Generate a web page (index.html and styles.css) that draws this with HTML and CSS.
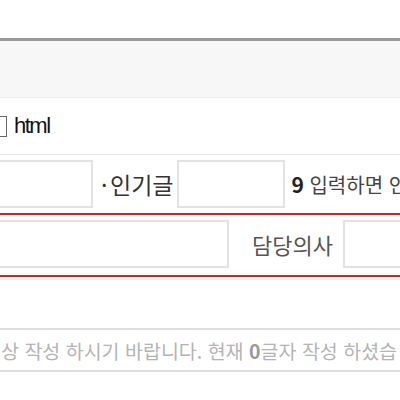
FILE: index.html
```html
<!DOCTYPE html>
<html lang="ko">
<head>
    <meta charset="UTF-8">
    <meta name="viewport" content="width=device-width, initial-scale=1.0">
    <title>글쓰기</title>
    <link rel="stylesheet" href="styles.css">
</head>
<body>
    <div class="page">
        <div class="board-head"></div>

        <div class="opt-row">
            <span class="check"></span>
            <span class="opt-label">html</span>
        </div>

        <div class="field-row">
            <input type="text" class="input in-a">
            <span class="label label-hot"><span class="dot">·</span>인기글</span>
            <input type="text" class="input in-b">
            <span class="hint"><b>9</b> 입력하면 인</span>
        </div>

        <div class="field-row red-row">
            <input type="text" class="input in-c">
            <span class="label label-doc">담당의사</span>
            <input type="text" class="input in-d">
        </div>

        <div class="blank-row"></div>

        <div class="count-box">
            <span class="count-text">상 작성 하시기 바랍니다. 현재 <b>0</b>글자 작성 하셨습</span>
        </div>
    </div>
</body>
</html>
```

FILE: styles.css
```css
body {
    margin: 0;
    background: #fff;
    color: #333;
    font-family: "Noto Sans CJK KR", "Noto Sans", sans-serif;
    width: 400px;
    height: 400px;
    overflow: hidden;
}
.page {
    padding-top: 38px;
}
.board-head {
    height: 56px;
    background: #f7f7f7;
    border-top: 3px solid #9a9a9a;
    border-bottom: 1px solid #ececec;
}
.opt-row {
    height: 56px;
    display: flex;
    align-items: center;
    gap: 7px;
    white-space: nowrap;
}
.check {
    width: 20px;
    height: 21px;
    margin-left: -13px;
    box-sizing: border-box;
    border: 1px solid #666;
    background: #fff;
    flex-shrink: 0;
}
.opt-label {
    font-family: "Liberation Sans", Arial, sans-serif;
    font-size: 22px;
    letter-spacing: -1.5px;
    color: #111;
}
.field-row {
    display: flex;
    align-items: center;
    border-top: 1px solid #e5e5e5;
    padding: 5px 0 5px;
    white-space: nowrap;
}
.input {
    height: 48px;
    box-sizing: border-box;
    border: 2px solid #e2e2e2;
    background: #fff;
    margin: 0;
    padding: 0;
    flex-shrink: 0;
}
.in-a {
    width: 120px;
    margin-left: -27px;
}
.in-b {
    width: 108px;
    margin-left: 4px;
}
.in-c {
    width: 260px;
    margin-left: -31px;
}
.in-d {
    width: 100px;
    margin-left: 10px;
}
.label {
    font-size: 23px;
    line-height: 1;
}
.label-hot {
    color: #333;
    margin-left: 8px;
}
.dot {
    display: inline-block;
    width: 9px;
}
.label-doc {
    font-size: 22px;
    color: #555;
    margin-left: 23px;
}
.hint {
    font-size: 20px;
    line-height: 1;
    color: #444;
    margin-left: 6px;
}
.hint b {
    font-size: 21px;
    color: #222;
}
.red-row {
    border-top: 2px solid #e01e1e;
    border-bottom: 2px solid #e01e1e;
    padding: 5px 0 7px;
}
.blank-row {
    height: 48px;
    margin-top: 2px;
    border-top: 1px solid #ededed;
}
.count-box {
    height: 40px;
    display: flex;
    align-items: center;
    border-top: 2px solid #dedede;
    border-bottom: 2px solid #dedede;
    padding-left: 1px;
    white-space: nowrap;
}
.count-text {
    font-size: 19.5px;
    color: #b4b4b4;
}
.count-text b {
    color: #9a9a9a;
}
```
